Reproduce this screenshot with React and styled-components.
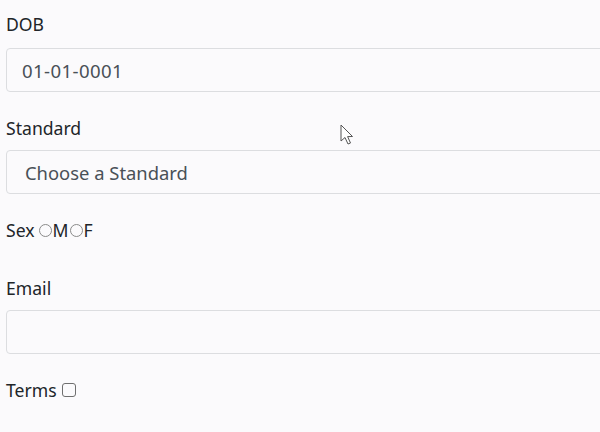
import React from "react";
import styled, { createGlobalStyle } from "styled-components";

const GlobalStyle = createGlobalStyle`
  html, body {
    margin: 0;
    padding: 0;
    background: #fbfafc;
    overflow: hidden;
  }
  body {
    font-family: "Noto Sans", "Open Sans", sans-serif;
    color: #212529;
  }
`;

const Page = styled.div`
  position: relative;
  width: 600px;
  height: 432px;
  overflow: hidden;
`;

const Form = styled.form`
  display: flex;
  flex-direction: column;
  padding: 12px 0 0 6px;
  width: 660px;
`;

const Group = styled.div`
  display: flex;
  flex-direction: column;
  margin-bottom: ${(p) => p.$gap || 24}px;
`;

const Label = styled.label`
  font-size: 17.6px;
  line-height: 24px;
  margin-bottom: ${(p) => p.$gap || 10}px;
`;

const Input = styled.input`
  box-sizing: border-box;
  height: 44px;
  width: 100%;
  padding: 0 15px;
  font-family: inherit;
  font-size: 18.6px;
  letter-spacing: 0.4px;
  color: #495057;
  background: #fbfafc;
  border: 1px solid #dcdde0;
  border-radius: 4px;
  outline: none;
`;

const Select = styled.select`
  box-sizing: border-box;
  height: 44px;
  width: 100%;
  padding: 0 18px;
  font-family: inherit;
  font-size: 18.4px;
  color: #495057;
  background: #fbfafc;
  border: 1px solid #dcdde0;
  border-radius: 4px;
  appearance: none;
  outline: none;
`;

const InlineRow = styled.div`
  display: flex;
  align-items: center;
  font-size: 17.6px;
  line-height: 24px;
  margin-bottom: ${(p) => p.$gap || 24}px;
`;

const Radio = styled.span`
  box-sizing: border-box;
  display: inline-block;
  flex: none;
  width: 13px;
  height: 13px;
  border: 1px solid #8a8a8a;
  border-radius: 50%;
  margin: 0 1px 0 ${(p) => (p.$first ? 4 : 1)}px;
`;

const Check = styled.span`
  box-sizing: border-box;
  display: inline-block;
  width: 14px;
  height: 14px;
  border: 1px solid #6f6f6f;
  border-radius: 3px;
  margin-left: 5px;
`;

const Cursor = styled.svg`
  position: absolute;
  left: 340px;
  top: 124px;
`;

export default function App() {
  return (
    <Page>
      <GlobalStyle />
      <Form>
        <Group>
          <Label $gap={12}>DOB</Label>
          <Input defaultValue="01-01-0001" />
        </Group>
        <Group>
          <Label>Standard</Label>
          <Select defaultValue="">
            <option value="">Choose a Standard</option>
          </Select>
        </Group>
        <InlineRow $gap={34}>
          Sex <Radio $first />M<Radio />F
        </InlineRow>
        <Group>
          <Label>Email</Label>
          <Input />
        </Group>
        <InlineRow>
          Terms <Check />
        </InlineRow>
      </Form>
      <Cursor width="16" height="24" viewBox="0 0 16 24">
        <path
          d="M1 1 L1 17 L5 13.5 L8 20 L10.5 19 L7.6 12.6 L12.5 12.5 Z"
          fill="#fff"
          stroke="#555"
          strokeWidth="1"
          strokeLinejoin="round"
        />
      </Cursor>
    </Page>
  );
}
